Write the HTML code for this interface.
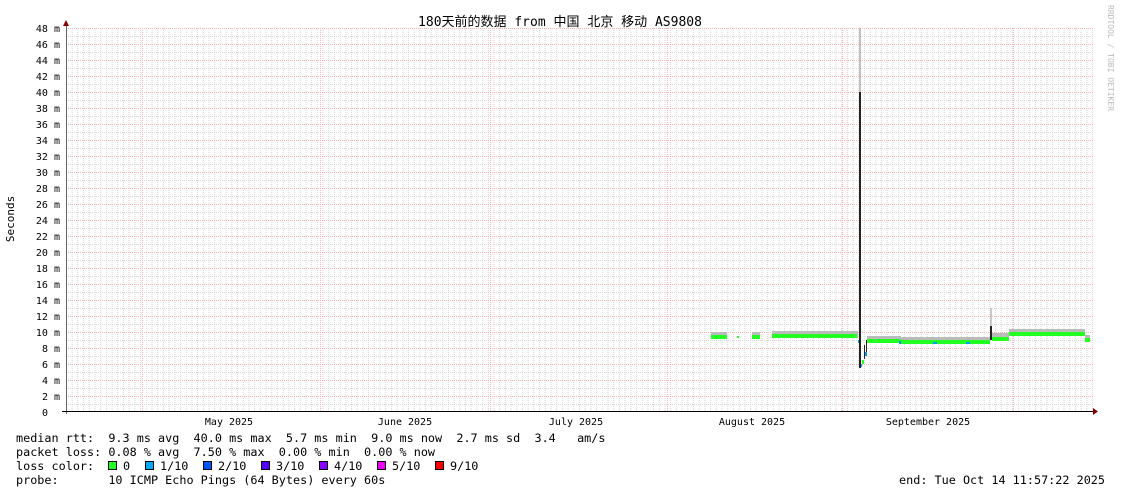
<!DOCTYPE html><html><head><meta charset="utf-8"><style>body{margin:0;background:#fff}svg{display:block}text{font-family:"DejaVu Sans Mono","Liberation Mono","Noto Sans CJK SC",monospace;fill:#000;white-space:pre}</style></head><body>
<svg width="1121" height="494" xmlns="http://www.w3.org/2000/svg">
<defs>
<pattern id="vg" x="66" y="0" width="5.7" height="2" patternUnits="userSpaceOnUse"><rect x="0" y="0" width="1" height="1" fill="#d4d4d4"/></pattern>
<pattern id="hg" x="0" y="28" width="2" height="8" patternUnits="userSpaceOnUse"><rect x="0" y="0" width="1" height="1" fill="#d4d4d4"/></pattern>
<pattern id="hr" x="0" y="28" width="2" height="16" patternUnits="userSpaceOnUse"><rect x="0" y="0" width="1" height="1" fill="#f2b4b4"/></pattern>
<pattern id="vr" x="0" y="0" width="1" height="2" patternUnits="userSpaceOnUse"><rect x="0" y="0" width="1" height="1" fill="#f4b4b4"/></pattern>
</defs>
<rect x="66" y="28" width="1027" height="384" fill="url(#vg)"/>
<rect x="66" y="28" width="1027" height="384" fill="url(#hg)"/>
<rect x="66" y="28" width="1027" height="384" fill="url(#hr)"/>
<g fill="url(#vr)"><rect x="142" y="28" width="1" height="384"/><rect x="320" y="28" width="1" height="384"/><rect x="490" y="28" width="1" height="384"/><rect x="667" y="28" width="1" height="384"/><rect x="842" y="28" width="1" height="384"/><rect x="1013" y="28" width="1" height="384"/></g>
<text x="560" y="26" font-size="13" text-anchor="middle">180天前的数据 from 中国 北京 移动 AS9808</text>
<text transform="translate(1108,5) rotate(90)" font-size="8" style="fill:#bbb">RRDTOOL / TOBI OETIKER</text>
<text transform="translate(14,219) rotate(-90)" font-size="11" text-anchor="middle">Seconds</text>
<g font-size="10" text-anchor="end">
<text x="60" y="32">48 m</text><text x="60" y="48">46 m</text><text x="60" y="64">44 m</text><text x="60" y="80">42 m</text><text x="60" y="96">40 m</text><text x="60" y="112">38 m</text><text x="60" y="128">36 m</text><text x="60" y="144">34 m</text><text x="60" y="160">32 m</text><text x="60" y="176">30 m</text><text x="60" y="192">28 m</text><text x="60" y="208">26 m</text><text x="60" y="224">24 m</text><text x="60" y="240">22 m</text><text x="60" y="256">20 m</text><text x="60" y="272">18 m</text><text x="60" y="288">16 m</text><text x="60" y="304">14 m</text><text x="60" y="320">12 m</text><text x="60" y="336">10 m</text><text x="60" y="352">8 m</text><text x="60" y="368">6 m</text><text x="60" y="384">4 m</text><text x="60" y="400">2 m</text><text x="48" y="416">0</text>
</g>
<g fill="#bbb">
<rect x="711" y="332" width="16" height="6"/><rect x="752" y="332" width="8" height="6"/><rect x="772" y="331" width="86" height="7"/>
<rect x="867" y="336" width="34" height="6"/><rect x="901" y="337" width="89" height="6"/><rect x="992" y="333" width="17" height="7"/><rect x="1009" y="329" width="76" height="7"/><rect x="1085" y="335" width="5" height="7"/>
</g>
<g fill="#2f2">
<rect x="711" y="335" width="16" height="4"/><rect x="737" y="336" width="2" height="2"/><rect x="752" y="335" width="8" height="4"/><rect x="772" y="334" width="85" height="4"/>
<rect x="867" y="339" width="34" height="4"/><rect x="901" y="340" width="89" height="4"/><rect x="992" y="337" width="17" height="4"/><rect x="1009" y="332" width="76" height="4"/><rect x="1085" y="338" width="5" height="4"/>
<rect x="862" y="360" width="2" height="4"/>
</g>
<g fill="#09e">
<rect x="858" y="340" width="1" height="3"/><rect x="860" y="364" width="2" height="3"/><rect x="865" y="352" width="2" height="4"/><rect x="933" y="342" width="4" height="2"/><rect x="966" y="342" width="4" height="2"/><rect x="899" y="341" width="2" height="3"/>
</g>
<g fill="#222">
<rect x="859" y="92" width="2" height="276"/><rect x="864" y="345" width="1" height="14"/><rect x="866" y="340" width="1" height="12"/><rect x="990" y="326" width="2" height="14"/>
</g>
<rect x="859.5" y="28" width="1" height="64" fill="#888"/><rect x="990.5" y="308" width="1" height="18" fill="#999"/>
<rect x="66" y="24" width="1" height="390" fill="#666"/>
<rect x="62" y="411" width="1033" height="1" fill="#000"/>
<path d="M63 26 L66 20 L69 26Z M1093 408 L1098 411.5 L1093 415Z" fill="#800"/>
<g font-size="10" text-anchor="middle"><text x="229" y="425">May 2025</text><text x="405" y="425">June 2025</text><text x="576" y="425">July 2025</text><text x="752" y="425">August 2025</text><text x="928" y="425">September 2025</text></g>
<g font-size="11.8">
<text x="16" y="442">median rtt:  9.3 ms avg  40.0 ms max  5.7 ms min  9.0 ms now  2.7 ms sd  3.4   am/s</text>
<text x="16" y="456">packet loss: 0.08 % avg  7.50 % max  0.00 % min  0.00 % now</text>
<text x="16" y="470">loss color:</text>
<text x="123" y="470">0</text><text x="160" y="470">1/10</text><text x="218" y="470">2/10</text><text x="276" y="470">3/10</text><text x="334" y="470">4/10</text><text x="392" y="470">5/10</text><text x="450" y="470">9/10</text>
<text x="16" y="484">probe:       10 ICMP Echo Pings (64 Bytes) every 60s</text>
<text x="1105" y="484" text-anchor="end">end: Tue Oct 14 11:57:22 2025</text>
</g>
<g stroke="#000" stroke-width="1"><rect x="108.5" y="461.5" width="8" height="8" fill="#2f2"/><rect x="145.5" y="461.5" width="8" height="8" fill="#0af"/><rect x="203.5" y="461.5" width="8" height="8" fill="#05f"/><rect x="261.5" y="461.5" width="8" height="8" fill="#50f"/><rect x="319.5" y="461.5" width="8" height="8" fill="#80f"/><rect x="377.5" y="461.5" width="8" height="8" fill="#e0f"/><rect x="435.5" y="461.5" width="8" height="8" fill="#f00"/></g>
</svg></body></html>
